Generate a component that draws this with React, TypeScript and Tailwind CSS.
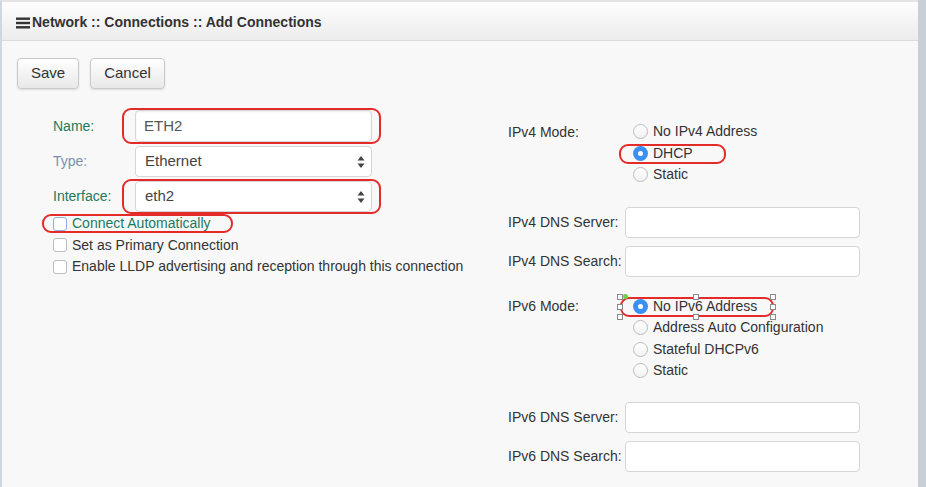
import React from 'react'

const font = { fontFamily: '"Liberation Sans", Arial, sans-serif' }

function RedRing({ className }: { className: string }) {
  return <div className={`pointer-events-none absolute rounded-[9px] border-2 border-[#e52a2a] ${className}`} />
}

function SelectArrows() {
  return (
    <svg width="8" height="13" viewBox="0 0 8 13" className="absolute right-[6px] top-1/2 -translate-y-1/2">
      <path d="M4 0.5 L7.5 5 L0.5 5 Z" fill="#444" />
      <path d="M4 12.5 L7.5 8 L0.5 8 Z" fill="#444" />
    </svg>
  )
}

function Field({ label, labelClass, children }: { label: string; labelClass: string; children: React.ReactNode }) {
  return (
    <div className="flex items-center">
      <div className={`w-[82px] text-[14px] ${labelClass}`}>{label}</div>
      {children}
    </div>
  )
}

function Checkbox({ label, focus, green }: { label: string; focus?: boolean; green?: boolean }) {
  return (
    <div className="flex h-[21.5px] items-center">
      <span
        className={`h-[14px] w-[14px] rounded-[3px] border bg-white ${focus ? 'border-[#8fb0e0]' : 'border-[#bdbdbd]'}`}
      />
      <span className={`ml-[5px] text-[14px] ${green ? 'text-[#1d7a5c]' : 'text-[#333]'}`}>{label}</span>
    </div>
  )
}

function Radio({ label, checked }: { label: string; checked?: boolean }) {
  return (
    <div className="flex h-[21.5px] items-center pl-[8px]">
      {checked ? (
        <span className="flex h-[15px] w-[15px] items-center justify-center rounded-full bg-[#3b8ff3]">
          <span className="h-[5px] w-[5px] rounded-full bg-white" />
        </span>
      ) : (
        <span className="h-[15px] w-[15px] rounded-full border border-[#bcbcbc] bg-gradient-to-b from-white to-[#f2f2f2]" />
      )}
      <span className="ml-[5px] text-[14px] text-[#333]">{label}</span>
    </div>
  )
}

function TextBox() {
  return <div className="h-[31px] w-[235px] rounded-[4px] border border-[#d6d6d6] bg-white" />
}

function RightField({ label }: { label: string }) {
  return (
    <div className="flex items-center">
      <div className="w-[117px] text-[14px] text-[#333]">{label}</div>
      <TextBox />
    </div>
  )
}

function Handle({ className }: { className: string }) {
  return <span className={`absolute h-[6px] w-[6px] border border-[#888] bg-white ${className}`} />
}

export default function App() {
  return (
    <div className="flex h-[487px] w-[926px] overflow-hidden bg-[#c9cfd7]" style={font}>
      <div className="flex w-[918px] flex-col border-l-2 border-t-2 border-l-[#cfd6df] border-t-[#e3e3e3] bg-[#f8f8f8]">
        <div className="flex h-[39px] shrink-0 items-center border-b border-[#dcdcdc] bg-gradient-to-b from-[#fdfdfd] to-[#ececec] pl-[14px] pt-[3px]">
          <svg width="15" height="12" viewBox="0 0 15 12" className="mr-[1px]">
            <rect x="0" y="0.5" width="14" height="2.4" fill="#333" />
            <rect x="0" y="4.8" width="14" height="2.4" fill="#333" />
            <rect x="0" y="9.1" width="14" height="2.4" fill="#333" />
          </svg>
          <span className="text-[14px] font-bold text-[#333]">Network :: Connections :: Add Connections</span>
        </div>

        <div className="flex gap-[11px] pl-[15px] pt-[17px]">
          <button className="h-[31px] w-[62px] rounded-[4px] border border-[#cacaca] bg-gradient-to-b from-white to-[#e8e8e8] text-[15px] text-[#333] shadow-[0_1px_2px_rgba(0,0,0,0.12)]">
            Save
          </button>
          <button className="h-[31px] w-[75px] rounded-[4px] border border-[#cacaca] bg-gradient-to-b from-white to-[#e8e8e8] text-[15px] text-[#333] shadow-[0_1px_2px_rgba(0,0,0,0.12)]">
            Cancel
          </button>
        </div>

        <div className="mt-[21px] flex">
          <div className="w-[506px] pl-[51px]">
            <div className="flex flex-col gap-[4px]">
              <div className="relative">
                <Field label="Name:" labelClass="text-[#1d7a5c]">
                  <div className="flex h-[32px] w-[237px] items-center rounded-[4px] border border-[#d6d6d6] bg-white pl-[8px] text-[15px] text-[#555] shadow-[inset_0_1px_2px_rgba(0,0,0,0.08)]">
                    ETH2
                  </div>
                </Field>
                <RedRing className="left-[69px] top-[-2px] h-[36px] w-[259px]" />
              </div>
              <Field label="Type:" labelClass="text-[#7b92ae]">
                <div className="relative flex h-[31px] w-[237px] items-center rounded-[4px] border border-[#d6d6d6] bg-white pl-[9px] text-[15px] text-[#444]">
                  Ethernet
                  <SelectArrows />
                </div>
              </Field>
              <div className="relative">
                <Field label="Interface:" labelClass="text-[#1d7a5c]">
                  <div className="relative flex h-[31px] w-[237px] items-center rounded-[4px] border border-[#d6d6d6] bg-white pl-[9px] text-[15px] text-[#444]">
                    eth2
                    <SelectArrows />
                  </div>
                </Field>
                <RedRing className="left-[69px] top-[-2px] h-[35px] w-[259px]" />
              </div>
            </div>
            <div className="mt-[1px]">
              <div className="relative">
                <Checkbox label="Connect Automatically" focus green />
                <RedRing className="left-[-11px] top-[1px] h-[19px] w-[191px]" />
              </div>
              <Checkbox label="Set as Primary Connection" />
              <Checkbox label="Enable LLDP advertising and reception through this connection" />
            </div>
          </div>

          <div className="flex-1 pt-[11px]">
            <div className="flex">
              <div className="w-[117px] pt-[1px] text-[14px] leading-[21.5px] text-[#333]">IPv4 Mode:</div>
              <div>
                <Radio label="No IPv4 Address" />
                <div className="relative">
                  <Radio label="DHCP" checked />
                  <RedRing className="left-[-6px] top-[1px] h-[20px] w-[107px]" />
                </div>
                <Radio label="Static" />
              </div>
            </div>

            <div className="mt-[21px] flex flex-col gap-[8px]">
              <RightField label="IPv4 DNS Server:" />
              <RightField label="IPv4 DNS Search:" />
            </div>

            <div className="mt-[19px] flex">
              <div className="w-[117px] text-[14px] leading-[21.5px] text-[#333]">IPv6 Mode:</div>
              <div>
                <div className="relative">
                  <Radio label="No IPv6 Address" checked />
                  <RedRing className="left-[-5px] top-[1px] h-[20px] w-[154px]" />
                  <Handle className="left-[-8px] top-[-2px]" />
                  <Handle className="left-[68px] top-[-2px]" />
                  <Handle className="left-[145px] top-[-2px]" />
                  <Handle className="left-[-8px] top-[8px]" />
                  <Handle className="left-[145px] top-[8px]" />
                  <Handle className="left-[-8px] top-[18px]" />
                  <Handle className="left-[68px] top-[18px]" />
                  <Handle className="left-[145px] top-[18px]" />
                  <span className="absolute left-[-2px] top-[-2px] h-[5px] w-[5px] rounded-full bg-[#6fcf4a]" />
                </div>
                <Radio label="Address Auto Configuration" />
                <Radio label="Stateful DHCPv6" />
                <Radio label="Static" />
              </div>
            </div>

            <div className="mt-[20px] flex flex-col gap-[8px]">
              <RightField label="IPv6 DNS Server:" />
              <RightField label="IPv6 DNS Search:" />
            </div>
          </div>
        </div>
      </div>
    </div>
  )
}
